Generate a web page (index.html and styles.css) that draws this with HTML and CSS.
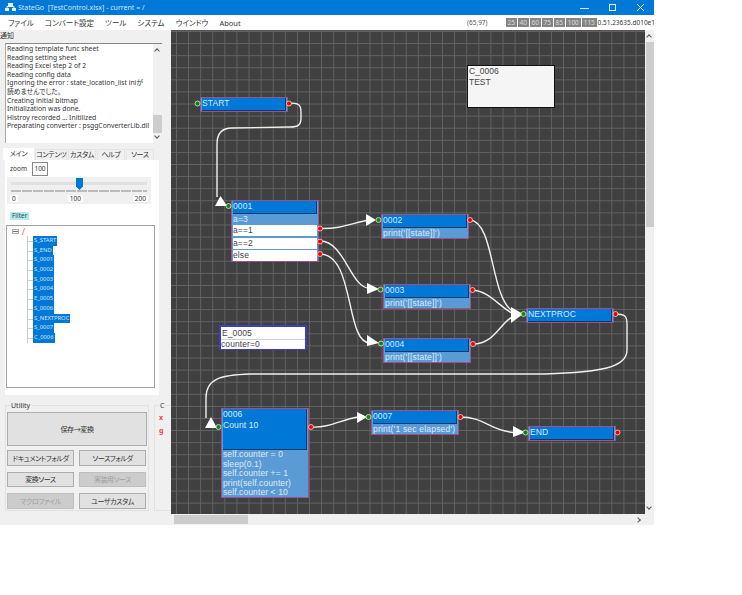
FILE: index.html
```html
<!DOCTYPE html>
<html lang="ja">
<head>
    <meta charset="UTF-8">
    <title>StateGo</title>
    <link rel="stylesheet" href="styles.css">
</head>
<body>
    <div class="window">
        <div class="titlebar">
            <svg class="app-icon" width="11" height="9" viewBox="0 0 11 9">
                <rect x="3" y="0" width="5" height="3" fill="#e8f1fa"/>
                <rect x="0" y="5" width="4" height="3" fill="#e8f1fa"/>
                <rect x="7" y="5" width="4" height="3" fill="#e8f1fa"/>
                <path d="M2 5V3.5H9V5" fill="none" stroke="#e8f1fa"/>
            </svg>
            <span class="title-text">StateGo&nbsp; [TestControl.xlsx] - current = /</span>
            <div class="win-btns">
                <svg width="10" height="10" viewBox="0 0 10 10"><path d="M0 5.500H9" stroke="#dceafa"/></svg>
                <svg width="10" height="10" viewBox="0 0 10 10"><rect x="1.500" y="1.500" width="6" height="6" fill="none" stroke="#e8f1fa"/></svg>
                <svg width="10" height="10" viewBox="0 0 10 10"><path d="M1 1L8 8M8 1L1 8" stroke="#e8f1fa"/></svg>
            </div>
        </div>

        <div class="menubar">
            <span class="menu-item">ファイル</span>
            <span class="menu-item">コンバート設定</span>
            <span class="menu-item">ツール</span>
            <span class="menu-item">システム</span>
            <span class="menu-item">ウインドウ</span>
            <span class="menu-item">About</span>
            <div class="menu-status">
                <span class="coords">(65,97)</span>
                <div class="zoom-btns">
                    <span>25</span><span>40</span><span>60</span><span>75</span><span>85</span><span class="wide">100</span><span class="wide">115</span>
                </div>
                <span class="version">0.51.23635.d010e1</span>
            </div>
        </div>

        <div class="main">
            <div class="side">
                <div class="notice-label">通知</div>
                <div class="log">
                    <div class="log-text">
                        <div>Reading template func sheet</div>
                        <div>Reading setting sheet</div>
                        <div>Reading Excel step 2 of 2</div>
                        <div>Reading config data</div>
                        <div>Ignoring the error : state_location_list iniが</div>
                        <div>読めませんでした。</div>
                        <div>Creating initial bitmap</div>
                        <div>Initialization was done.</div>
                        <div>Histroy recorded ... Initilized</div>
                        <div>Preparating converter : psggConverterLib.dll</div>
                    </div>
                    <div class="log-scroll">
                        <span class="chev-up"></span>
                        <span class="log-thumb"></span>
                        <span class="chev-down"></span>
                    </div>
                </div>

                <div class="tabs">
                    <span class="tab active">メイン</span>
                    <span class="tab t2">コンテンツ</span>
                    <span class="tab t3">カスタム</span>
                    <span class="tab t4">ヘルプ</span>
                    <span class="tab t5">ソース</span>
                </div>
                <div class="tab-panel">
                    <div class="zoom-row">
                        <span>zoom</span>
                        <span class="zoom-input">100</span>
                    </div>
                    <div class="slider">
                        <div class="slider-track"><span class="slider-thumb"></span></div>
                        <div class="slider-ticks"></div>
                        <div class="slider-labels"><span>0</span><span>100</span><span>200</span></div>
                    </div>
                    <span class="filter">Filter</span>
                    <div class="tree">
                        <div class="tree-root"><span class="minus"></span><span class="root-name">/</span></div>
                        <ul class="tree-list">
                            <li><span>S_START</span></li>
                            <li><span>S_END</span></li>
                            <li><span>S_0001</span></li>
                            <li><span>S_0002</span></li>
                            <li><span>S_0003</span></li>
                            <li><span>S_0004</span></li>
                            <li><span>E_0005</span></li>
                            <li><span>S_0006</span></li>
                            <li><span>S_NEXTPROC</span></li>
                            <li><span>S_0007</span></li>
                            <li><span>C_0006</span></li>
                        </ul>
                    </div>
                </div>

                <div class="groups">
                    <div class="group utility">
                        <span class="legend">Utility</span>
                        <button class="btn big">保存→変換</button>
                        <div class="btn-grid">
                            <button class="btn">ドキュメントフォルダ</button>
                            <button class="btn">ソースフォルダ</button>
                            <button class="btn">変換ソース</button>
                            <button class="btn off">実装用ソース</button>
                            <button class="btn off">マクロファイル</button>
                            <button class="btn">ユーザカスタム</button>
                        </div>
                    </div>
                    <div class="group other">
                        <span class="legend">C</span>
                        <span class="red-mark">x</span>
                        <span class="red-mark">g</span>
                    </div>
                </div>
            </div>

            <div class="canvas-area">
                <div class="canvas-row">
                    <div class="canvas">
                        <svg class="wires" width="474" height="484" viewBox="171 30 474 484">
                            <g fill="none" stroke="#f0f0f0" stroke-width="1.400">
                                <path d="M289 103C298 103 301 104 301 112V118C301 125 298 127 290 127L232 128C222 128 217 133 217 144V197"/>
                                <path d="M320 228.500C340 229 350 224 368 220"/>
                                <path d="M320 241C345 241 350 288 370 288.500"/>
                                <path d="M320 254C355 254 345 343 370 343"/>
                                <path d="M470 220C495 222 490 300 514 312"/>
                                <path d="M472 290C490 291 500 308 514 314"/>
                                <path d="M473 344C495 344 500 322 514 316"/>
                                <path d="M615 314C625 314 627 316 627 324V350C627 368 600 372 545 374H250C222 375 206 378 206 398V418"/>
                                <path d="M311 427C330 428 340 420 358 417"/>
                                <path d="M460 417C485 417 490 431 514 432.500"/>
                            </g>
                            <g fill="#fff">
                                <polygon points="220.500,196 215,206 227,206"/>
                                <polygon points="376,220 366,214 366,226"/>
                                <polygon points="379,289 367,283 367,294"/>
                                <polygon points="379,343 367,335 367,346"/>
                                <polygon points="523,314 511,307 511,323"/>
                                <polygon points="211,417 205,428 217,428"/>
                                <polygon points="367,417 357,412 357,423"/>
                                <polygon points="525,432.500 513,426 513,437"/>
                            </g>
                            <g fill="#0a8a0a" stroke="#d8e8d8" stroke-width="0.800">
                                <circle cx="197.500" cy="103.500" r="2.500"/>
                                <circle cx="228.500" cy="206" r="2.500"/>
                                <circle cx="378.500" cy="220" r="2.500"/>
                                <circle cx="380.500" cy="289.500" r="2.500"/>
                                <circle cx="381" cy="343.500" r="2.500"/>
                                <circle cx="523.500" cy="314" r="2.500"/>
                                <circle cx="218.500" cy="427" r="2.500"/>
                                <circle cx="368.500" cy="417" r="2.500"/>
                                <circle cx="525.500" cy="432.500" r="2.500"/>
                            </g>
                            <g fill="#f00000" stroke="#f0d8d8" stroke-width="0.800">
                                <circle cx="289" cy="103.500" r="2.500"/>
                                <circle cx="320" cy="228.500" r="2.500"/>
                                <circle cx="320" cy="241.500" r="2.500"/>
                                <circle cx="320" cy="254" r="2.500"/>
                                <circle cx="470" cy="220" r="2.500"/>
                                <circle cx="472.500" cy="290" r="2.500"/>
                                <circle cx="473" cy="344" r="2.500"/>
                                <circle cx="615.500" cy="314" r="2.500"/>
                                <circle cx="311" cy="427" r="2.500"/>
                                <circle cx="460.500" cy="417" r="2.500"/>
                                <circle cx="617.500" cy="432.500" r="2.500"/>
                            </g>
                        </svg>

                        <div class="node n-start"><div class="head">START</div></div>

                        <div class="node n-0001">
                            <div class="head">0001</div>
                            <div class="sub">a=3</div>
                            <div class="branch">a==1</div>
                            <div class="branch">a==2</div>
                            <div class="branch">else</div>
                        </div>

                        <div class="node n-0002">
                            <div class="head">0002</div>
                            <div class="sub">print('[[state]]')</div>
                        </div>
                        <div class="node n-0003">
                            <div class="head">0003</div>
                            <div class="sub">print('[[state]]')</div>
                        </div>
                        <div class="node n-0004">
                            <div class="head">0004</div>
                            <div class="sub">print('[[state]]')</div>
                        </div>

                        <div class="node n-next"><div class="head">NEXTPROC</div></div>

                        <div class="node embed n-e0005">
                            <div class="embed-name">E_0005</div>
                            <div class="embed-val">counter=0</div>
                        </div>

                        <div class="node n-0006">
                            <div class="head tall">0006<br>Count 10</div>
                            <div class="sub lines">self.counter = 0<br>sleep(0.1)<br>self.counter += 1<br>print(self.counter)<br>self.counter &lt; 10</div>
                        </div>

                        <div class="node n-0007">
                            <div class="head">0007</div>
                            <div class="sub">print('1 sec elapsed')</div>
                        </div>

                        <div class="node n-end"><div class="head">END</div></div>

                        <div class="comment">C_0006<br>TEST</div>
                    </div>
                    <div class="vscroll">
                        <span class="chev-up"></span>
                        <span class="v-thumb"></span>
                        <span class="chev-down"></span>
                    </div>
                </div>
                <div class="hscroll">
                    <span class="h-thumb"></span>
                    <span class="chev-right"></span>
                </div>
            </div>
        </div>
    </div>
</body>
</html>
```

FILE: styles.css
```css
* {
    box-sizing: border-box;
    padding: 0;
    margin: 0;
}

body {
    font-family: 'Noto Sans', 'Noto Sans CJK JP', sans-serif;
    font-size: 7px;
    font-feature-settings: "palt";
    background-color: #fff;
    color: #333;
}

.window {
    width: 654px;
    height: 525px;
    display: flex;
    flex-direction: column;
    background-color: #f0f0f0;
    overflow: hidden;
}

/* title + menu */
.titlebar {
    height: 15px;
    flex: none;
    display: flex;
    align-items: center;
    padding-left: 5px;
    background-color: #0078d7;
    color: #d5e8f8;
}

.title-text {
    margin-left: 2px;
    font-size: 7px;
    white-space: nowrap;
}

.win-btns {
    margin-left: auto;
    display: flex;
    gap: 18px;
    padding-right: 8px;
}

.menubar {
    height: 15px;
    flex: none;
    display: flex;
    align-items: center;
    padding-left: 8px;
    background-color: #fff;
    color: #333;
}

.menu-item {
    margin-right: 11px;
    font-size: 7.500px;
    white-space: nowrap;
}

.menu-status {
    margin-left: auto;
    width: 187px;
    flex: none;
    display: flex;
    align-items: center;
    overflow: hidden;
}

.coords {
    width: 39px;
    flex: none;
    font-size: 6.500px;
    color: #555;
}

.zoom-btns {
    display: flex;
    flex: none;
    gap: 1.500px;
}

.zoom-btns span {
    width: 10.500px;
    height: 9px;
    text-align: center;
    line-height: 9px;
    font-size: 6.500px;
    background-color: #858585;
    color: #ddd;
}

.zoom-btns .wide {
    width: 14.500px;
}

.version {
    margin-left: 1px;
    font-size: 6.500px;
    white-space: nowrap;
}

.main {
    flex: 1;
    display: flex;
    min-height: 0;
}

/* left side */
.side {
    width: 171px;
    flex: none;
    overflow: hidden;
}

.notice-label {
    height: 13px;
    line-height: 12px;
    font-size: 7px;
}

.log {
    width: 157px;
    height: 100px;
    margin-left: 5px;
    display: flex;
    background-color: #fff;
    border-top: 1px solid #888;
    border-left: 1px solid #aaa;
}

.log-text {
    flex: 1;
    padding: 1px 0 0 1px;
    font-size: 6.800px;
    line-height: 8.600px;
    white-space: nowrap;
    overflow: hidden;
}

.log-scroll {
    width: 9px;
    flex: none;
    position: relative;
    background-color: #f0f0f0;
}

.log-thumb {
    position: absolute;
    left: 0;
    top: 71px;
    width: 9px;
    height: 18px;
    background-color: #cdcdcd;
}

.chev-up,
.chev-down {
    position: absolute;
    left: 2px;
    width: 4px;
    height: 4px;
    border-left: 1px solid #555;
    border-top: 1px solid #555;
}

.chev-up {
    top: 5px;
    transform: rotate(45deg);
}

.chev-down {
    bottom: 5px;
    transform: rotate(225deg);
}

.tabs {
    height: 12px;
    margin: 5px 0 0 3px;
    display: flex;
    align-items: flex-end;
    width: 152px;
}

.tab {
    height: 11px;
    margin-right: 1px;
    text-align: center;
    line-height: 10px;
    font-size: 7px;
    letter-spacing: -0.300px;
    white-space: nowrap;
    background-color: #f0f0f0;
    border: 1px solid #e4e4e4;
    border-bottom: none;
    width: 28px;
}

.tab.active {
    width: 31px;
    height: 12px;
    line-height: 11px;
    background-color: #fff;
    border: none;
}

.tab.t2 {
    width: 32px;
}

.tab-panel {
    width: 154px;
    height: 235px;
    margin-left: 5px;
    display: flex;
    flex-direction: column;
    align-items: flex-start;
    background-color: #fff;
}

.zoom-row {
    height: 17px;
    padding-left: 5px;
    display: flex;
    align-items: center;
    gap: 5px;
    font-size: 6.500px;
}

.zoom-input {
    width: 16px;
    height: 14px;
    border: 1px solid #888;
    text-align: center;
    line-height: 12px;
    font-size: 6.500px;
}

.slider {
    width: 144px;
    height: 27px;
    margin-left: 2px;
    padding: 5px 4px 0;
    background-color: #f0f0f0;
}

.slider-track {
    height: 3px;
    position: relative;
    background-color: #e0e0e0;
}

.slider-thumb {
    position: absolute;
    left: 65px;
    top: -4px;
    width: 7px;
    height: 12px;
    background-color: #0078d7;
    clip-path: polygon(0 0, 100% 0, 100% 70%, 50% 100%, 0 70%);
}

.slider-ticks {
    height: 2px;
    margin-top: 5px;
    background: repeating-linear-gradient(90deg, #bbb 0 10px, #f0f0f0 10px 11px);
}

.slider-labels {
    margin: 3px -1px 0;
    display: flex;
    justify-content: space-between;
    font-size: 6.500px;
    line-height: 7px;
}

.slider-labels span {
    padding: 0 2px;
    background-color: #fff;
}

.filter {
    height: 8px;
    margin: 8px 0 0 5px;
    padding: 0 2px;
    line-height: 8px;
    font-size: 6.500px;
    background-color: #aeeeee;
    color: #444;
}

.tree {
    width: 149px;
    height: 163px;
    margin: 5px 0 0 1px;
    padding: 0 0 0 5px;
    border: 1px solid #a0a0a0;
    overflow: hidden;
}

.tree-root {
    height: 9px;
    display: flex;
    align-items: center;
    gap: 3px;
    margin-top: 1px;
    color: #e05050;
    font-size: 8px;
}

.minus {
    width: 7px;
    height: 5px;
    border: 1px solid #aaa;
    background: linear-gradient(#777, #777) center / 5px 1px no-repeat;
}

.tree-list {
    list-style: none;
    margin-left: 15px;
    border-left: 1px solid #ccc;
}

.tree-list li {
    height: 9.700px;
    padding-left: 5px;
    position: relative;
    display: flex;
    align-items: center;
}

.tree-list li::before {
    content: "";
    position: absolute;
    left: 0;
    top: 5px;
    width: 5px;
    border-top: 1px solid #ccc;
}

.tree-list span {
    padding: 0 1px;
    line-height: 9.700px;
    font-size: 5.800px;
    background-color: #0078d7;
    color: #d5e8f8;
}

.groups {
    margin-top: 10px;
    display: flex;
    gap: 5px;
}

.group {
    position: relative;
    height: 106px;
    border: 1px solid #e2e2e2;
}

.utility {
    width: 146px;
    margin-left: 5px;
    padding: 6px 1px 0;
}

.other {
    width: 20px;
    padding: 8px 0 0 4px;
    border-right: none;
    display: flex;
    flex-direction: column;
    gap: 5px;
}

.legend {
    position: absolute;
    left: 4px;
    top: -5px;
    padding: 0 1px;
    line-height: 9px;
    font-size: 7px;
    background-color: #f0f0f0;
}

.red-mark {
    color: #f04040;
    line-height: 8px;
    font-weight: bold;
}

.btn {
    display: block;
    width: 100%;
    height: 15.500px;
    font-family: inherit;
    font-feature-settings: "palt";
    font-size: 7px;
    letter-spacing: -0.400px;
    white-space: nowrap;
    color: #333;
    background-color: #e1e1e1;
    border: 1px solid #adadad;
}

.btn.big {
    width: 140px;
    height: 34px;
}

.btn.off {
    background-color: #ccc;
    border-color: #bfbfbf;
    color: #a0a0a0;
}

.btn-grid {
    margin-top: 4px;
    display: grid;
    grid-template-columns: 67px 67px;
    column-gap: 5px;
    row-gap: 6px;
}

/* canvas */
.canvas-area {
    flex: 1;
    min-width: 0;
    display: flex;
    flex-direction: column;
}

.canvas-row {
    flex: 1;
    min-height: 0;
    display: flex;
}

.canvas {
    flex: 1;
    position: relative;
    overflow: hidden;
    background-color: #404040;
    background-image:
        linear-gradient(#636363 1px, transparent 1px),
        linear-gradient(90deg, #636363 1px, transparent 1px);
    background-size: 12.100px 12.100px;
    background-position: 5px 0;
    border-top: 1px solid #555;
}

.wires {
    position: absolute;
    left: 0;
    top: -1px;
    z-index: 1;
}

.node {
    position: absolute;
    width: 88px;
    display: flex;
    flex-direction: column;
    padding: 0 1px;
    font-family: 'Liberation Sans', sans-serif;
    font-size: 8.500px;
    letter-spacing: 0.100px;
    line-height: 11px;
    background-color: #5b9bd5;
    border: 1px solid #a0508c;
}

.head {
    height: 13px;
    background-color: #0078d7;
    border-bottom: 1px solid #123a66;
    border-right: 1px solid #123a66;
    color: #d9ebfb;
    white-space: nowrap;
}

.head.tall {
    height: 41px;
    line-height: 10.500px;
}

.sub {
    height: 10px;
    line-height: 10px;
    letter-spacing: 0.200px;
    color: #dcebf8;
    white-space: nowrap;
}

.sub.lines {
    height: 47px;
    line-height: 9.500px;
    letter-spacing: 0.100px;
}

.branch {
    height: 11px;
    margin-top: 1.500px;
    line-height: 11px;
    background-color: #fff;
    color: #444;
}

.n-start { left: 29px; top: 66px; height: 15px; }
.n-0001 { left: 60px; top: 169px; height: 62px; }
.n-0002 { left: 210px; top: 183px; }
.n-0003 { left: 212px; top: 253px; }
.n-0004 { left: 212px; top: 307px; }
.n-next { left: 355px; top: 277px; height: 15px; }
.n-e0005 { left: 48px; top: 294px; }
.n-0006 { left: 50px; top: 377px; }
.n-0007 { left: 200px; top: 379px; }
.n-end { left: 357px; top: 395px; height: 15px; }

.embed {
    height: 25px;
    border: 2px solid #3c3cc8;
    background-color: #c8d0d8;
    padding: 0;
    gap: 1px;
    color: #444;
}

.embed-name {
    height: 13px;
    padding-left: 1px;
    line-height: 12px;
    background-color: #fff;
}

.embed-val {
    flex: 1;
    line-height: 9px;
    background-color: #fff;
}

.comment {
    position: absolute;
    left: 296px;
    top: 34px;
    width: 88px;
    height: 43px;
    padding: 0 1px;
    font-family: 'Liberation Sans', sans-serif;
    font-size: 8.500px;
    line-height: 11px;
    background-color: #f5f5f5;
    border: 1px solid #111;
    color: #444;
}

.vscroll {
    width: 9px;
    flex: none;
    position: relative;
    background-color: #f0f0f0;
}

.v-thumb {
    position: absolute;
    left: 1px;
    top: 12px;
    width: 8px;
    height: 185px;
    background-color: #cdcdcd;
}

.hscroll {
    height: 11px;
    flex: none;
    position: relative;
    background-color: #f0f0f0;
}

.h-thumb {
    position: absolute;
    left: 3px;
    top: 1px;
    width: 74px;
    height: 9px;
    background-color: #cdcdcd;
}

.chev-right {
    position: absolute;
    right: 14px;
    top: 4px;
    width: 4px;
    height: 4px;
    border-right: 1px solid #555;
    border-top: 1px solid #555;
    transform: rotate(45deg);
}
```
